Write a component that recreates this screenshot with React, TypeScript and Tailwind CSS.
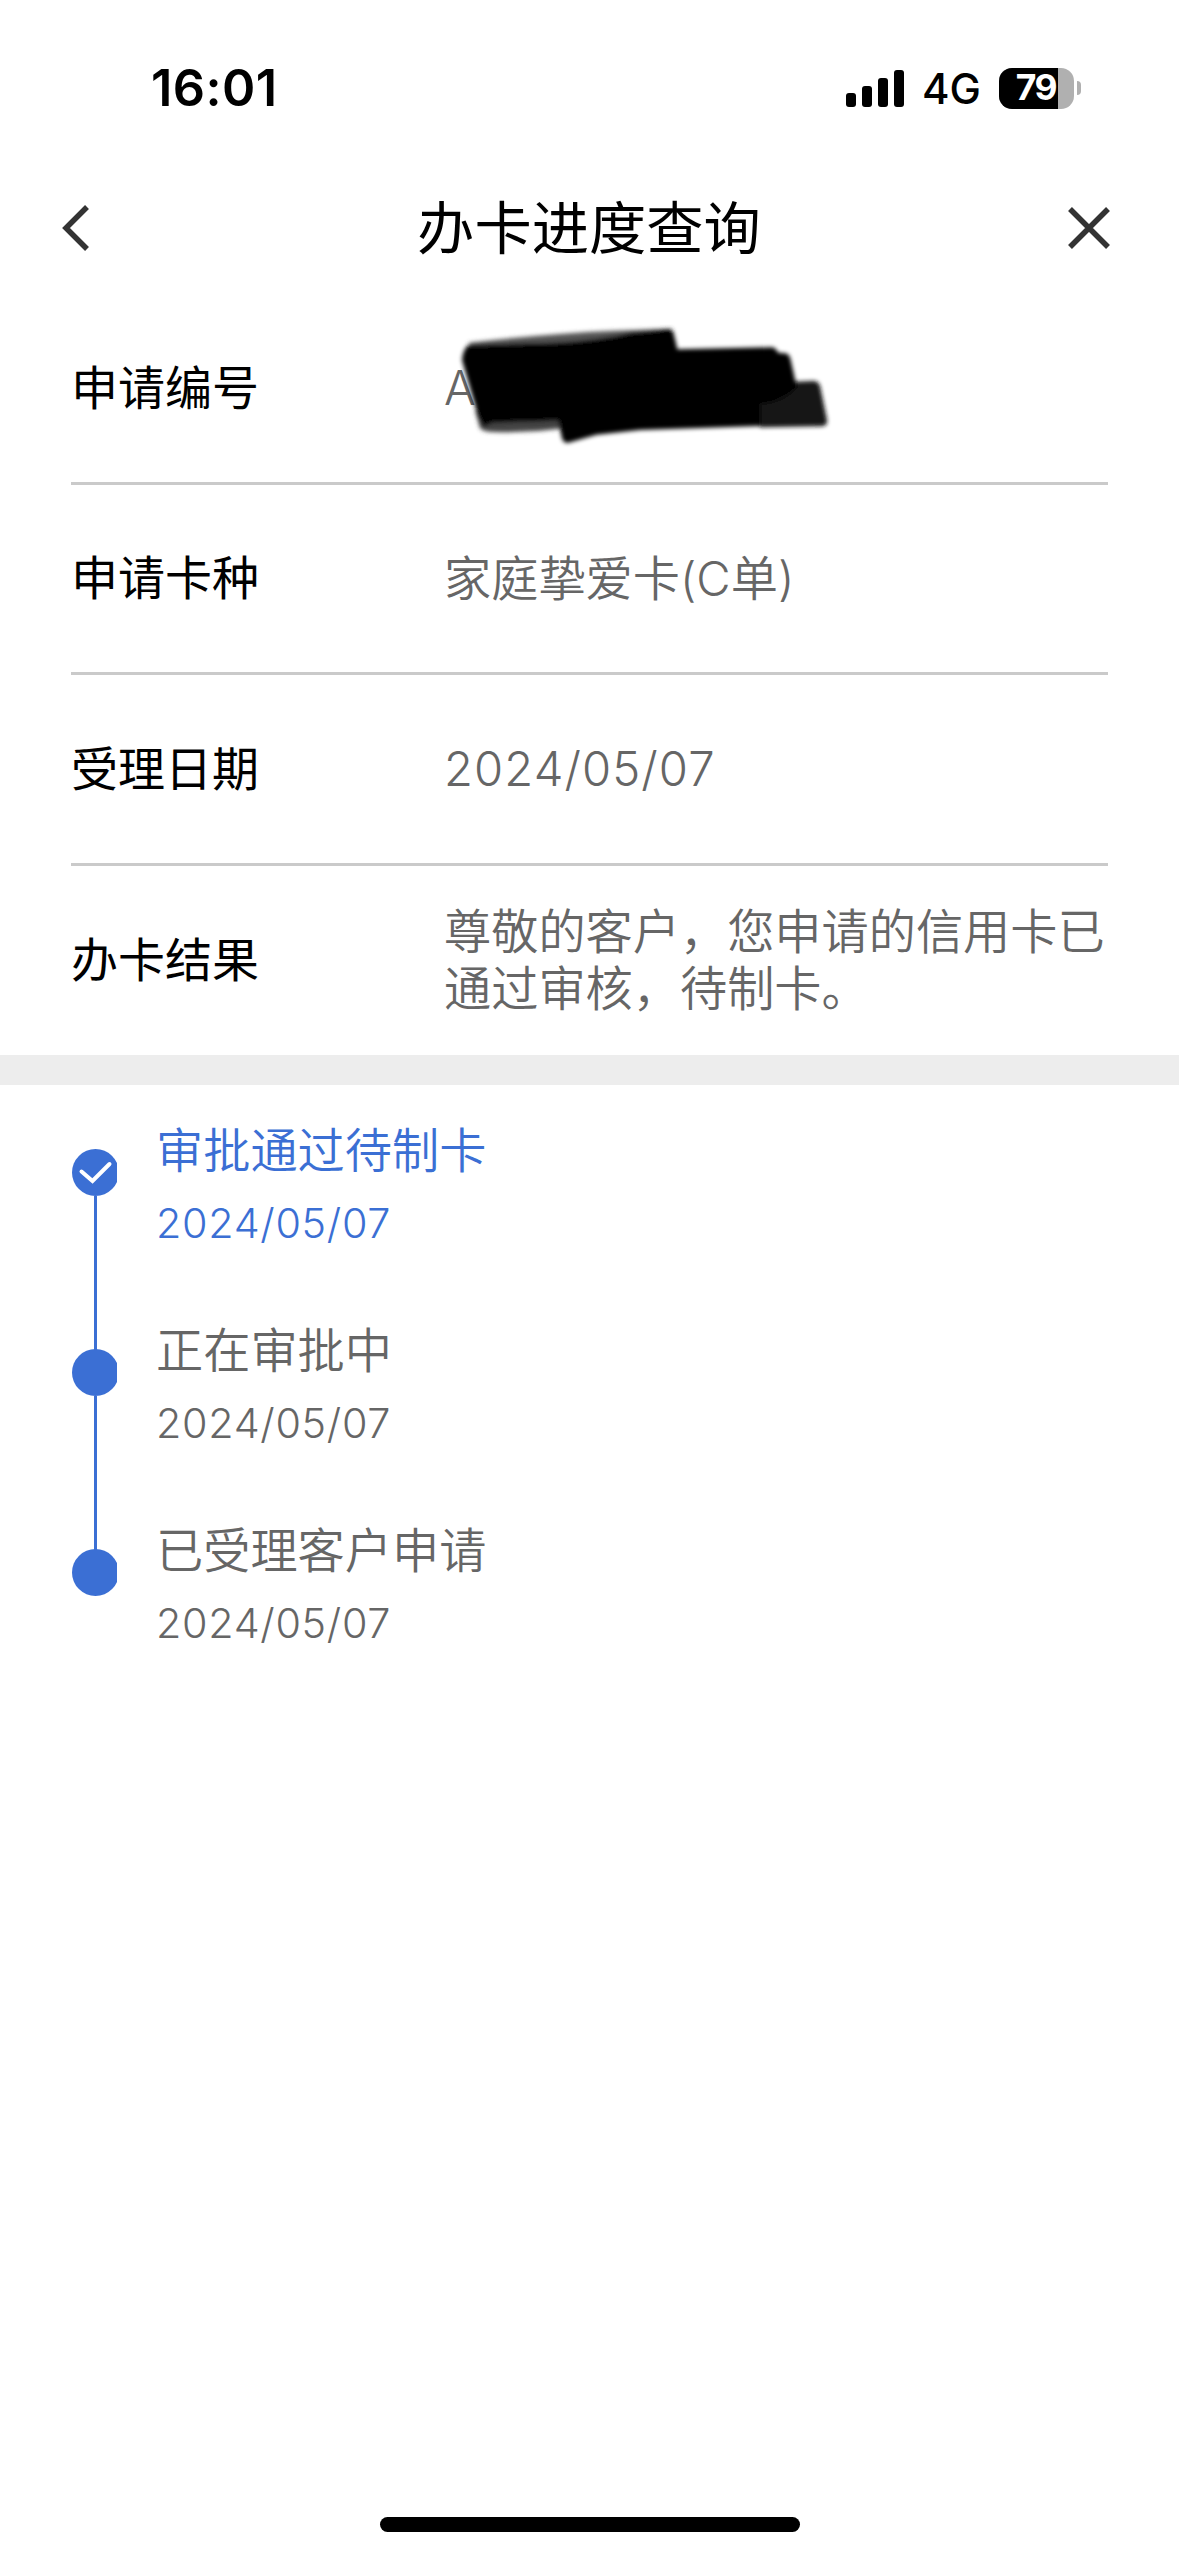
import { ReactNode } from 'react';

interface InfoRowProps {
  label: string;
  children: ReactNode;
  last?: boolean;
}

interface Step {
  title: string;
  date: string;
  active?: boolean;
}

const steps: Step[] = [
  { title: '审批通过待制卡', date: '2024/05/07', active: true },
  { title: '正在审批中', date: '2024/05/07' },
  { title: '已受理客户申请', date: '2024/05/07' },
];

const StatusBar = () => (
  <div className="flex h-[176px] items-center justify-between pl-[151px] pr-[98px]">
    <span className="text-[50.5px] leading-none font-semibold tracking-[0.4px]">16:01</span>
    <div className="flex items-center">
      <div className="flex h-[37px] items-end gap-[6px]">
        <div className="h-[14px] w-[10px] rounded-[3px] bg-black" />
        <div className="h-[21px] w-[10px] rounded-[3px] bg-black" />
        <div className="h-[29px] w-[10px] rounded-[3px] bg-black" />
        <div className="h-[37px] w-[10px] rounded-[3px] bg-black" />
      </div>
      <span className="ml-[18px] w-[77px] pt-[2px] text-[42px] leading-none font-[450]">4G</span>
      <div className="h-[41px] w-[75px] overflow-hidden rounded-[13px] bg-[#b0b0b0]">
        <div className="flex h-full w-[59px] items-center justify-end bg-black pr-[2px] text-[35.5px] leading-none font-bold tracking-[-1.5px] text-white">
          79
        </div>
      </div>
      <div className="ml-[3px] h-[14px] w-[4px] rounded-r-full bg-[#b0b0b0]" />
    </div>
  </div>
);

const NavBar = () => (
  <div className="mb-[14px] flex h-[104px] items-center justify-between pr-[69px] pl-[62px]">
    <svg className="h-[46px] w-[48px]" viewBox="0 0 48 46" fill="none" stroke="#333" strokeWidth="5.5">
      <path d="M25 2 4 23l21 21" />
    </svg>
    <h1 className="pt-[1px] text-[57.3px] leading-none">办卡进度查询</h1>
    <svg className="h-[42px] w-[42px]" viewBox="0 0 42 42" fill="none" stroke="#333" strokeWidth="5.5">
      <path d="M2 2 40 40M40 2 2 40" />
    </svg>
  </div>
);

const InfoRow = ({ label, children, last }: InfoRowProps) => (
  <div className={`flex items-center ${last ? 'h-[189.2px]' : 'h-[190.6px] border-b-3 border-[#cacaca]'}`}>
    <div className="w-[373px] shrink-0 text-[47px]">{label}</div>
    <div className="flex-1 leading-[57.3px] font-[350] text-[#666]">{children}</div>
  </div>
);

// Marker strokes hiding the application number
const Redaction = () => (
  <svg className="absolute -top-[59px] -left-[44px] h-[200px] w-[480px]" viewBox="0 0 1440 600">
    <defs>
      <filter id="soft" x="-5%" y="-10%" width="110%" height="120%">
        <feGaussianBlur stdDeviation="6" />
      </filter>
    </defs>
    <g filter="url(#soft)">
      <path fill="#555" d="M205 128 Q450 100 640 92 L815 86 L830 140 H215Z" />
      <path fill="#444" d="M225 330 L240 385 Q250 396 280 396 Q380 400 480 386 V330Z" />
      <path fill="#121212" d="M1080 250 L1240 243 Q1255 243 1260 258 L1281 360 Q1284 379 1262 379 L1080 382Z" />
      <path
        fill="#000"
        d="M205 135 L460 128 Q600 120 690 98 L800 88 Q820 86 822 105 L832 148 L1115 142 Q1125 142 1135 158 L1155 160 Q1168 160 1172 180 L1185 238 L1190 262 Q1140 310 1080 310 V378 L720 390 L590 404 L505 428 Q488 430 485 410 L475 362 L280 368 L250 380 L235 350 L186 180 Q188 150 205 135Z"
      />
    </g>
  </svg>
);

const StepMarker = ({ checked }: { checked?: boolean }) => (
  <svg className="block h-[47px] w-[45px] shrink-0" viewBox="0 0 45 47">
    <circle cx="23.5" cy="23.5" r="23.5" fill="#3b6fd4" />
    {checked && (
      <path d="M9.5 22.5 20.5 32 37.5 15" fill="none" stroke="#fff" strokeWidth="4" strokeLinecap="round" />
    )}
  </svg>
);

const Timeline = () => (
  <div className="flex flex-col pt-[36px] pl-[72px]">
    {steps.map((step, index) => (
      <div key={index} className="flex h-[200px]">
        <div className="flex w-[84px] flex-col pt-[28px]">
          <StepMarker checked={step.active} />
          {index < steps.length - 1 && <div className="-mb-[29px] ml-[22px] w-[3px] flex-1 bg-[#3b6fd4]" />}
        </div>
        <div className={`font-[350] ${step.active ? 'text-[#3b6fd4]' : 'text-[#666]'}`}>
          <div className="leading-[60px]">{step.title}</div>
          <div className="mt-[18px] text-[41.3px] leading-[48px] tracking-[0.7px]">{step.date}</div>
        </div>
      </div>
    ))}
  </div>
);

export default function App() {
  return (
    <div className="flex h-[2556px] w-[1179px] flex-col overflow-hidden bg-white font-['Inter','Noto_Sans_CJK_SC',sans-serif] text-[47.2px] text-black">
      <StatusBar />
      <NavBar />
      <div className="pr-[71px] pl-[71px]">
        <InfoRow label="申请编号">
          <div className="relative">
            A
            <Redaction />
          </div>
        </InfoRow>
        <InfoRow label="申请卡种">家庭挚爱卡(C单)</InfoRow>
        <InfoRow label="受理日期">
          <span className="tracking-[1.1px]">2024/05/07</span>
        </InfoRow>
        <InfoRow label="办卡结果" last>
          尊敬的客户，您申请的信用卡已通过审核，待制卡。
        </InfoRow>
      </div>
      <div className="h-[30px] bg-[#ededed]" />
      <Timeline />
      <div className="mx-auto mt-auto mb-[24px] h-[15px] w-[420px] shrink-0 rounded-full bg-black" />
    </div>
  );
}
